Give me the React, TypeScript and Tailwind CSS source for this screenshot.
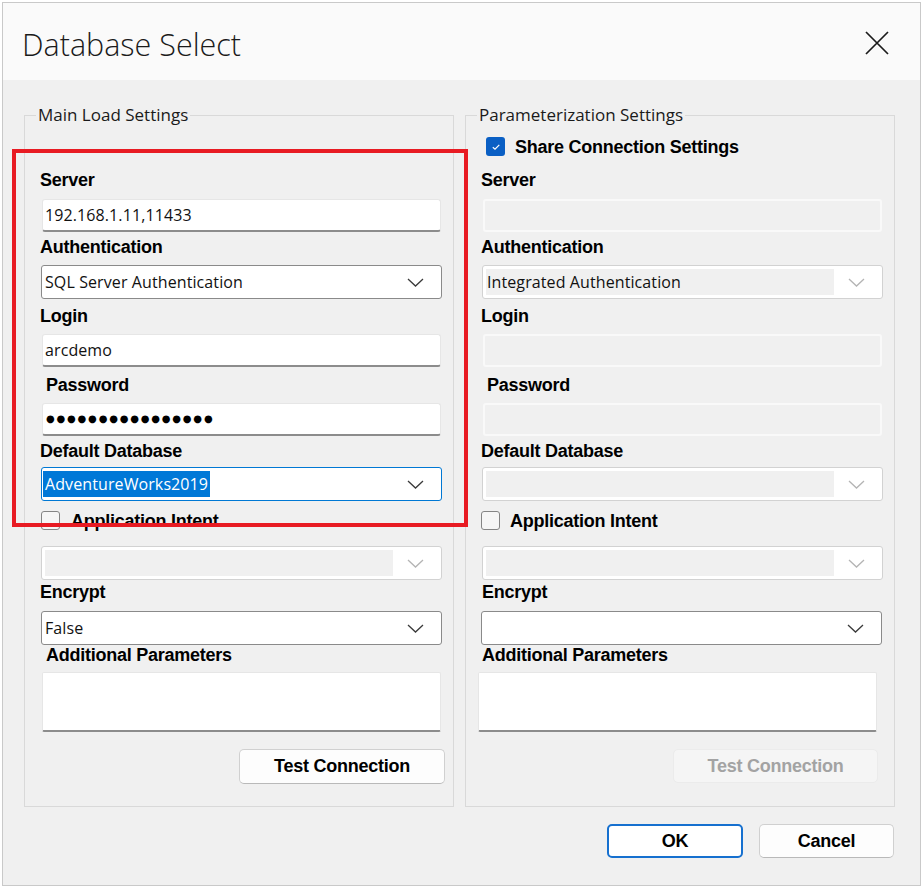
import React from "react";

const LABEL =
  "font-['Liberation_Sans',Arial,sans-serif] font-bold text-[18px] leading-[20px] tracking-[-0.25px] text-black whitespace-nowrap";
const VALUE = "font-['Open_Sans',sans-serif] text-[16px] leading-[22px] tracking-[0.1px] text-[#111111] whitespace-nowrap";

function Chevron({ disabled }: { disabled?: boolean }) {
  return (
    <svg width="17" height="9" viewBox="0 0 17 9" fill="none">
      <path d="M1 1L8.5 8L16 1" stroke={disabled ? "#b4b4b4" : "#3a3a3a"} strokeWidth="1.3" />
    </svg>
  );
}

function TextBox({
  className,
  children,
  disabled,
}: {
  className: string;
  children?: React.ReactNode;
  disabled?: boolean;
}) {
  if (disabled) {
    return <div className={`h-[33px] rounded-[3px] border-2 border-[#f9f9f9] bg-[#f0f0f0] ${className}`} />;
  }
  return (
    <div
      className={`h-[33px] rounded-[3px] bg-white border border-[#e6e6e6] border-b-2 border-b-[#8c8c8c] flex items-center pl-[2px] ${VALUE} ${className}`}
    >
      {children}
    </div>
  );
}

function Select({
  className,
  children,
  disabled,
  focused,
}: {
  className: string;
  children?: React.ReactNode;
  disabled?: boolean;
  focused?: boolean;
}) {
  const border = disabled ? "border-[#d2d2d2]" : focused ? "border-[#0078d4]" : "border-[#8a8a8a]";
  return (
    <div className={`h-[34px] rounded-[3px] border ${border} bg-white flex p-[3px] ${className}`}>
      <div
        className={`flex-1 flex items-center ${VALUE} ${
          disabled ? "bg-[#f0f0f0] pl-[1px] text-[#8d8d8d]" : ""
        }`}
      >
        {children}
      </div>
      <div className="w-[45px] flex items-center justify-center">
        <Chevron disabled={disabled} />
      </div>
    </div>
  );
}

function Check({ checked }: { checked?: boolean }) {
  if (checked) {
    return (
      <div className="w-[19px] h-[19px] rounded-[3px] bg-[#0a5fc4] flex items-center justify-center shrink-0">
        <svg width="10" height="8" viewBox="0 0 10 8" fill="none">
          <path d="M1.8 4.2L4 6.2L8.3 1.8" stroke="white" strokeWidth="1.2" />
        </svg>
      </div>
    );
  }
  return <div className="w-[19px] h-[19px] rounded-[3px] border border-[#858585] bg-[#f6f6f6] shrink-0" />;
}

function Legend({ children }: { children: React.ReactNode }) {
  return (
    <legend className="ml-[11px] px-[2px] text-[17px] leading-[22px] text-[#1a1a1a] font-['Open_Sans',sans-serif]">
      {children}
    </legend>
  );
}

function Button({
  className,
  children,
  disabled,
  primary,
}: {
  className: string;
  children: React.ReactNode;
  disabled?: boolean;
  primary?: boolean;
}) {
  const look = disabled
    ? "bg-[#f5f5f5] border border-[#ebebeb] text-[#a3a3a3]"
    : primary
    ? "bg-white border-2 border-[#1670cf] text-black"
    : "bg-[#fdfdfd] border border-[#d0d0d0] border-b-[#b9b9b9] text-black";
  return (
    <div
      className={`rounded-[5px] flex items-center justify-center font-['Liberation_Sans',Arial,sans-serif] font-bold text-[18px] tracking-[-0.25px] ${look} ${className}`}
    >
      {children}
    </div>
  );
}

export default function App() {
  return (
    <div className="relative w-[924px] h-[888px] bg-white overflow-hidden font-['Open_Sans',sans-serif]">
      <div className="ml-[2px] mt-[2px] w-[919px] h-[884px] border border-[#c9c9c9] bg-[#f0f0f0] flex flex-col">
        {/* Title bar */}
        <div className="h-[77px] bg-[#fafafa] flex justify-between items-start pl-[19px] pr-[31px] pt-[20px]">
          <span className="text-[30.5px] leading-[42px] font-light text-[#1b1b1b]">Database Select</span>
          <svg className="mt-[8px]" width="24" height="24" viewBox="0 0 24 24" fill="none">
            <path d="M1 1L23 23M23 1L1 23" stroke="#1b1b1b" strokeWidth="1.7" />
          </svg>
        </div>

        {/* Group boxes */}
        <div className="flex gap-[11px] pl-[21px] pt-[24px]">
          <fieldset className="w-[430px] border border-[#d9d9d9]">
            <Legend>Main Load Settings</Legend>
            <div className="flex flex-col items-start pb-[22px]">
              <div className={`${LABEL} ml-[15px] mt-[44px]`}>Server</div>
              <TextBox className="ml-[17px] w-[399px] mt-[9px]">192.168.1.11,11433</TextBox>
              <div className={`${LABEL} ml-[15px] mt-[5px]`}>Authentication</div>
              <Select className="ml-[16px] w-[401px] mt-[8px]">SQL Server Authentication</Select>
              <div className={`${LABEL} ml-[15px] mt-[7px]`}>Login</div>
              <TextBox className="ml-[17px] w-[399px] mt-[8px]">arcdemo</TextBox>
              <div className={`${LABEL} ml-[21px] mt-[8px]`}>Password</div>
              <TextBox className="ml-[17px] w-[399px] mt-[8px]">
                <span className="font-['DejaVu_Sans',sans-serif] text-[10px] tracking-[1.8px] text-black pl-[1px]">
                  ●●●●●●●●●●●●●●●●
                </span>
              </TextBox>
              <div className={`${LABEL} ml-[15px] mt-[5px]`}>Default Database</div>
              <Select className="ml-[16px] w-[401px] mt-[6px]" focused>
                <span className="self-stretch flex items-center -ml-[2px] px-[2px] bg-[#0078d7] text-white">
                  AdventureWorks2019
                </span>
              </Select>
              <div className="flex items-center h-[19px] ml-[16px] mt-[10px]">
                <Check />
                <span className={`${LABEL} ml-[11px]`}>Application Intent</span>
              </div>
              <Select className="ml-[16px] w-[401px] mt-[16px]" disabled />
              <div className={`${LABEL} ml-[15px] mt-[2px]`}>Encrypt</div>
              <Select className="ml-[16px] w-[401px] mt-[9px]">False</Select>
              <div className={`${LABEL} ml-[21px] mt-[0px]`}>Additional Parameters</div>
              <div className="ml-[17px] w-[399px] h-[60px] mt-[7px] bg-white border border-[#e6e6e6] border-b-2 border-b-[#8c8c8c] rounded-[2px]" />
              <Button className="ml-[214px] w-[206px] h-[35px] mt-[17px]">Test Connection</Button>
            </div>
          </fieldset>

          <fieldset className="w-[430px] border border-[#d9d9d9]">
            <Legend>Parameterization Settings</Legend>
            <div className="flex flex-col items-start pb-[22px]">
              <div className="flex items-center h-[19px] ml-[20px] mt-[11px]">
                <Check checked />
                <span className={`${LABEL} ml-[10px]`}>Share Connection Settings</span>
              </div>
              <div className={`${LABEL} ml-[15px] mt-[14px]`}>Server</div>
              <TextBox className="ml-[17px] w-[399px] mt-[9px]" disabled />
              <div className={`${LABEL} ml-[15px] mt-[5px]`}>Authentication</div>
              <Select className="ml-[16px] w-[401px] mt-[8px]" disabled>
                Integrated Authentication
              </Select>
              <div className={`${LABEL} ml-[15px] mt-[7px]`}>Login</div>
              <TextBox className="ml-[17px] w-[399px] mt-[8px]" disabled />
              <div className={`${LABEL} ml-[21px] mt-[8px]`}>Password</div>
              <TextBox className="ml-[17px] w-[399px] mt-[8px]" disabled />
              <div className={`${LABEL} ml-[15px] mt-[5px]`}>Default Database</div>
              <Select className="ml-[16px] w-[401px] mt-[6px]" disabled />
              <div className="flex items-center h-[19px] ml-[15px] mt-[10px]">
                <Check />
                <span className={`${LABEL} ml-[10px]`}>Application Intent</span>
              </div>
              <Select className="ml-[16px] w-[401px] mt-[16px]" disabled />
              <div className={`${LABEL} ml-[16px] mt-[2px]`}>Encrypt</div>
              <Select className="ml-[15px] w-[401px] mt-[9px]" />
              <div className={`${LABEL} ml-[16px] mt-[0px]`}>Additional Parameters</div>
              <div className="ml-[12px] w-[399px] h-[60px] mt-[7px] bg-white border border-[#e6e6e6] border-b-2 border-b-[#8c8c8c] rounded-[2px]" />
              <Button className="ml-[207px] w-[205px] h-[34px] mt-[17px]" disabled>
                Test Connection
              </Button>
            </div>
          </fieldset>
        </div>

        {/* Dialog buttons */}
        <div className="flex justify-end gap-[16px] pr-[26px] mt-[17px]">
          <Button className="w-[136px] h-[34px]" primary>
            OK
          </Button>
          <Button className="w-[135px] h-[34px]">Cancel</Button>
        </div>
      </div>

      {/* Red annotation rectangle */}
      <div className="absolute left-[12px] top-[149px] w-[456px] h-[378px] border-[4px] border-[#e81b23]" />
    </div>
  );
}
